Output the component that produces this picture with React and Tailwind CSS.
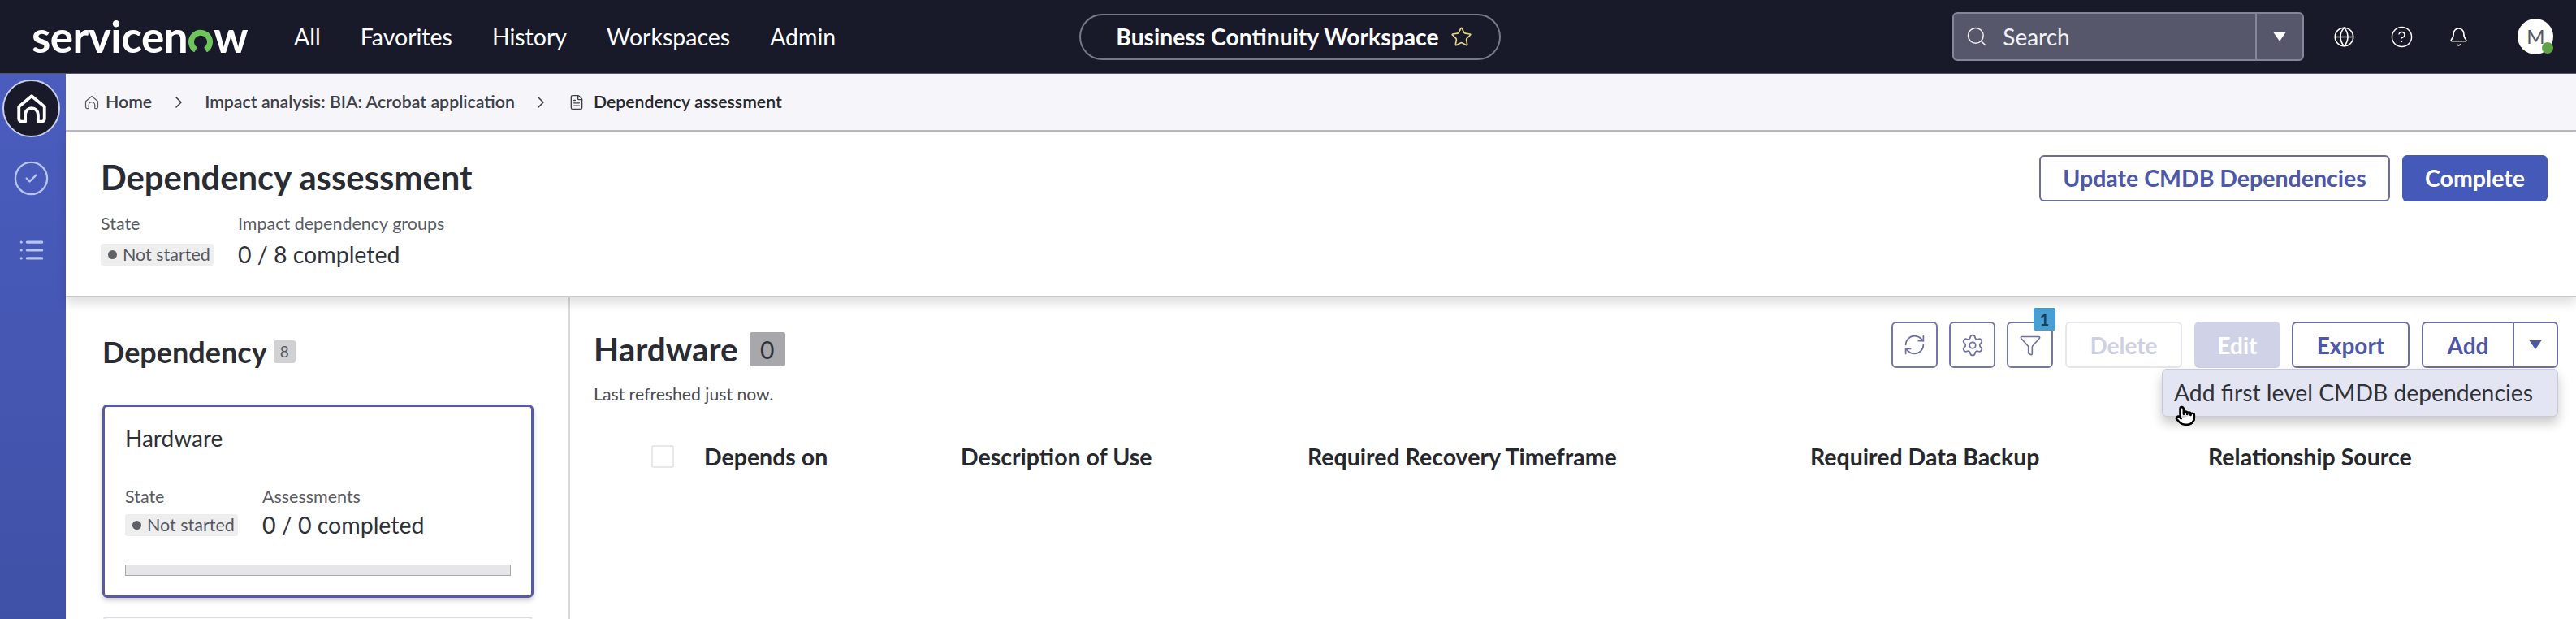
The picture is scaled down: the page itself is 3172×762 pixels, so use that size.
import { Globe, CircleHelp, Bell, Search, Star, RefreshCw, Settings, Funnel, ChevronRight, FileText, CircleCheck, List, Pointer } from "lucide-react"

const Triangle = ({ className }) => (
  <svg viewBox="0 0 16 12" className={className} fill="currentColor">
    <path d="M1 1h14L8 11z" />
  </svg>
)

const HomeIcon = ({ size, strokeWidth, className }) => (
  <svg viewBox="0 0 24 24" width={size} height={size} className={className} fill="none" stroke="currentColor" strokeWidth={strokeWidth} strokeLinejoin="round">
    <path d="M3 10.5 12 3l9 7.5V19a2 2 0 0 1-2 2h-2.5v-5a4.5 4.5 0 0 0-9 0v5H5a2 2 0 0 1-2-2z" />
  </svg>
)

const Logo = () => (
  <div className="flex items-center h-[50px] w-[263px] text-white font-bold text-[53px] leading-[50px] tracking-[-0.5px]">
    <span>servicen</span>
    <svg viewBox="0 0 32 28" className="w-[32px] h-[28px] mt-[9px] shrink-0">
      <path d="M10 25.5A11.5 11.5 0 1 1 22 25.5" fill="none" stroke="#6fc45c" strokeWidth="7" />
    </svg>
    <span>w</span>
  </div>
)

const TopBar = () => (
  <div className="h-[91px] shrink-0 bg-[#191a29] flex items-center pl-[39px] text-white border-b border-[#55566a]">
    <Logo />
    <nav className="flex gap-[49px] ml-[60px] text-[28.5px]">
      <span>All</span>
      <span>Favorites</span>
      <span>History</span>
      <span>Workspaces</span>
      <span>Admin</span>
    </nav>
    <div className="ml-[300px] w-[519px] h-[57px] rounded-full border-2 border-[#77788a] flex items-center pl-[43px] gap-[14px] font-bold text-[28.3px]">
      <span>Business Continuity Workspace</span>
      <Star size={27} strokeWidth={1.5} className="text-[#e2d48d]" />
    </div>
    <div className="ml-[556px] w-[433px] h-[60px] rounded-[6px] border-2 border-[#85869a] bg-[#56576a] flex items-center">
      <div className="flex-1 flex items-center pl-[14px] gap-[18px] text-[28px] text-[#f2f2f6]">
        <Search size={28} strokeWidth={1.3} />
        <span>Search</span>
      </div>
      <div className="w-[58px] h-full border-l-2 border-[#85869a] flex items-center justify-center">
        <Triangle className="w-[18px] h-[14px]" />
      </div>
    </div>
    <div className="flex items-center ml-[36px] gap-[43px]">
      <Globe size={27} strokeWidth={1.4} />
      <CircleHelp size={29} strokeWidth={1.2} />
      <Bell size={25} strokeWidth={1.5} />
    </div>
    <div className="relative ml-[60px] w-[44px] h-[44px] rounded-full bg-white text-[#55565f] flex items-center justify-center text-[24px]">
      M
      <span className="absolute right-0 bottom-[1px] w-[14px] h-[14px] rounded-full bg-[#5fa346]"></span>
    </div>
  </div>
)

const SideBar = () => (
  <aside className="w-[81px] shrink-0 bg-gradient-to-b from-[#4a5dbf] to-[#3f51a6] flex flex-col items-center pt-[7px] pr-[4px] text-[#b7c5f0]">
    <div className="w-[71px] h-[71px] rounded-full bg-[#191a29] border-2 border-[#c9cee6] flex items-center justify-center text-white">
      <HomeIcon size={42} strokeWidth={2.2} />
    </div>
    <CircleCheck size={47} strokeWidth={1.2} className="mt-[27px]" />
    <List size={34} strokeWidth={2.2} className="mt-[48px]" />
  </aside>
)

const Crumbs = () => (
  <div className="h-[71px] shrink-0 bg-[#f5f5fa] border-b-2 border-[#b9b9bf] flex items-center pl-[22px] text-[21.3px] font-semibold text-[#3f4149]">
    <HomeIcon size={20} strokeWidth={1.5} className="text-[#5b5d66]" />
    <span className="ml-[7px]">Home</span>
    <ChevronRight size={24} strokeWidth={1.6} className="ml-[21px]" />
    <span className="ml-[20px]">Impact analysis: BIA: Acrobat application</span>
    <ChevronRight size={24} strokeWidth={1.6} className="ml-[20px]" />
    <FileText size={20} strokeWidth={1.6} className="ml-[22px]" />
    <span className="ml-[11px] text-[#26282e]">Dependency assessment</span>
  </div>
)

const NotStarted = () => (
  <span className="inline-flex items-center gap-[7px] h-[27px] pl-[9px] pr-[4px] rounded-[3px] bg-[#eeeeee] text-[21.5px] text-[#55575f]">
    <span className="w-[11px] h-[11px] rounded-full bg-[#5f6066]"></span>
    Not started
  </span>
)

const PageHead = () => (
  <div className="relative z-10 h-[204px] shrink-0 bg-white border-b-2 border-[#c9c9c9] shadow-[0_8px_12px_rgba(0,0,0,0.12)] flex justify-between pl-[43px] pr-[35px]">
    <div>
      <h1 className="mt-[27px] text-[41.8px] leading-[58px] font-bold text-[#2a2c33]">Dependency assessment</h1>
      <div className="flex gap-[30px] mt-[14px]">
        <div className="flex flex-col gap-[11px]">
          <span className="text-[21.5px] leading-[28px] text-[#5a5c64]">State</span>
          <NotStarted />
        </div>
        <div className="flex flex-col gap-[11px]">
          <span className="text-[21.5px] leading-[28px] text-[#5a5c64]">Impact dependency groups</span>
          <span className="text-[28.5px] leading-[27px] text-[#2f3138]">0 / 8 completed</span>
        </div>
      </div>
    </div>
    <div className="flex gap-[15px] mt-[29px] h-[57px]">
      <button className="w-[432px] rounded-[6px] border-2 border-[#6c6da6] text-[#4d58a8] font-bold text-[28.5px]">Update CMDB Dependencies</button>
      <button className="w-[179px] rounded-[6px] bg-[#4459b8] text-white font-bold text-[28.5px]">Complete</button>
    </div>
  </div>
)

const LeftPanel = () => (
  <section className="w-[621px] shrink-0 border-r-2 border-[#d9d9dc] pl-[45px] pr-[43px] pt-[42px] overflow-hidden">
    <div className="flex items-center gap-[8px] h-[50px]">
      <h2 className="text-[36px] font-bold text-[#2a2c33]">Dependency</h2>
      <span className="w-[27px] h-[28px] rounded-[3px] bg-[#d1d1d4] flex items-center justify-center text-[19px] text-[#55575f]">8</span>
    </div>
    <div className="mt-[40px] h-[238px] rounded-[6px] border-[3px] border-[#5858a8] shadow-[0_3px_6px_rgba(0,0,0,0.2)] px-[25px] pt-[20px]">
      <div className="text-[28px] leading-[36px] text-[#2f3138]">Hardware</div>
      <div className="flex gap-[30px] mt-[40px]">
        <div className="flex flex-col gap-[8px]">
          <span className="text-[21.5px] leading-[28px] text-[#5a5c64]">State</span>
          <NotStarted />
        </div>
        <div className="flex flex-col gap-[8px]">
          <span className="text-[21.5px] leading-[28px] text-[#5a5c64]">Assessments</span>
          <span className="text-[28.5px] leading-[27px] text-[#2f3138]">0 / 0 completed</span>
        </div>
      </div>
      <div className="mt-[35px] h-[14px] border border-[#a9a9ad] bg-[#e6e6e8]"></div>
    </div>
    <div className="mt-[23px] h-[60px] rounded-[6px] border-2 border-[#dcdcdf]"></div>
  </section>
)

const iconBtn = "w-[57px] h-[57px] rounded-[6px] border-2 border-[#7475a8] flex items-center justify-center text-[#6d6fa5]"
const textBtn = "h-[57px] rounded-[6px] font-bold text-[28px] flex items-center justify-center"

const Toolbar = () => (
  <div className="relative flex items-center gap-[14px]">
    <div className={iconBtn}><RefreshCw size={29} strokeWidth={1.4} /></div>
    <div className={iconBtn}><Settings size={30} strokeWidth={1.4} /></div>
    <div className={"relative " + iconBtn}>
      <Funnel size={28} strokeWidth={1.4} />
      <span className="absolute -top-[19px] -right-[5px] w-[27px] h-[28px] rounded-[2px] bg-[#4a9fd2] text-[#173f5c] text-[20px] font-bold flex items-center justify-center">1</span>
    </div>
    <button className={textBtn + " w-[144px] ml-[1px] border-2 border-[#e6e6ec] text-[#cfd1e2]"}>Delete</button>
    <button className={textBtn + " w-[106px] ml-[1px] bg-[#d0d3e8] text-white"}>Edit</button>
    <button className={textBtn + " w-[145px] border-2 border-[#6c6da6] text-[#4d58a8]"}>Export</button>
    <div className="w-[168px] h-[57px] ml-[1px] rounded-[6px] border-2 border-[#6c6da6] flex text-[#4d58a8]">
      <span className="w-[110px] font-bold text-[28px] flex items-center justify-center">Add</span>
      <span className="flex-1 border-l-2 border-[#6c6da6] flex items-center justify-center">
        <Triangle className="w-[18px] h-[13px]" />
      </span>
    </div>
    <div className="absolute z-20 right-0 top-[58px] w-[488px] h-[59px] rounded-[6px] bg-[#e4e5f2] border border-[#c9cad8] shadow-[0_8px_14px_rgba(0,0,0,0.22)] flex items-center pl-[14px] text-[28.3px] text-[#2f3138] whitespace-nowrap">
      Add first level CMDB dependencies
    </div>
    <Pointer size={26} strokeWidth={2.4} className="absolute z-30 right-[446px] top-[103px] text-black fill-white" />
  </div>
)

const RightPanel = () => (
  <section className="flex-1 pl-[29px] pr-[22px] pt-[30px] min-w-0">
    <div className="flex justify-between items-start">
      <div className="flex items-center gap-[14px] mt-[13px]">
        <h2 className="text-[40.5px] leading-[42px] font-bold text-[#2a2c33]">Hardware</h2>
        <span className="w-[44px] h-[42px] rounded-[3px] bg-[#a8a8ac] flex items-center justify-center text-[30px] text-[#2f3138]">0</span>
      </div>
      <Toolbar />
    </div>
    <div className="mt-[18px] text-[21.2px] leading-[28px] text-[#4a4c54]">Last refreshed just now.</div>
    <div className="mt-[42px] ml-[71px] grid grid-cols-[65px_316px_427px_619px_490px_1fr] items-center text-[28.5px] font-bold text-[#26282e] whitespace-nowrap">
      <span className="w-[28px] h-[28px] rounded-[3px] border-2 border-[#e8e8ea]"></span>
      <span>Depends on</span>
      <span>Description of Use</span>
      <span>Required Recovery Timeframe</span>
      <span>Required Data Backup</span>
      <span>Relationship Source</span>
    </div>
  </section>
)

export default function App() {
  return (
    <div className="w-[3172px] h-[762px] overflow-hidden flex flex-col bg-white font-['Lato','Noto_Sans',sans-serif]">
      <TopBar />
      <div className="flex flex-1 min-h-0">
        <SideBar />
        <main className="flex-1 min-w-0 flex flex-col">
          <Crumbs />
          <PageHead />
          <div className="flex flex-1 min-h-0">
            <LeftPanel />
            <RightPanel />
          </div>
        </main>
      </div>
    </div>
  )
}
